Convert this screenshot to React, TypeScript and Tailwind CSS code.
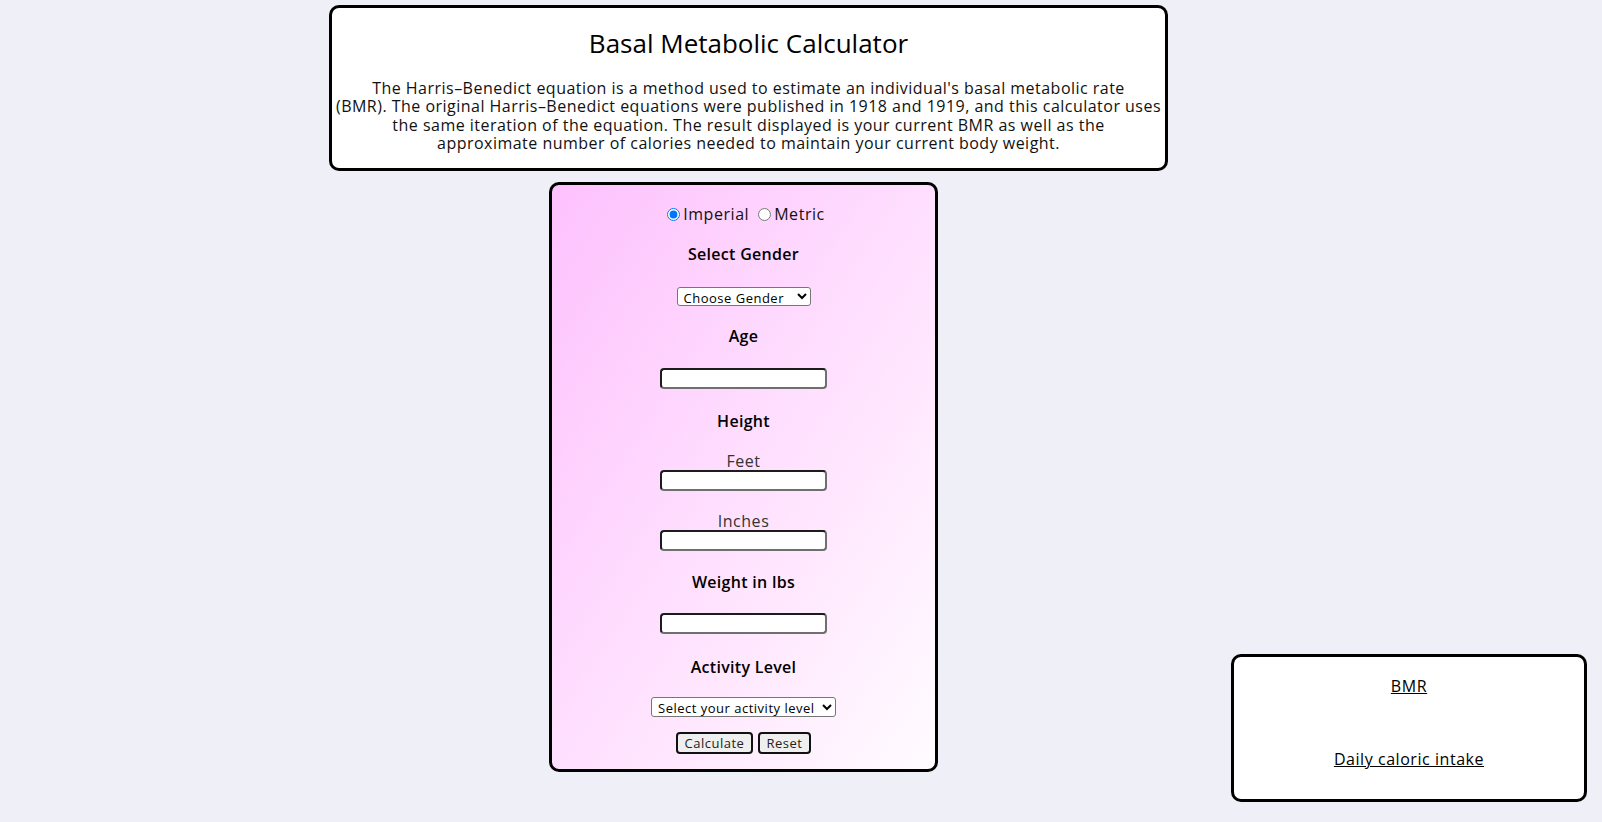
import React from "react";

function Label({ children, className = "" }: { children: React.ReactNode; className?: string }) {
  return <div className={"text-[16px] leading-[20px] font-semibold tracking-[0.3px] " + className}>{children}</div>;
}

function TextBox({ className = "" }: { className?: string }) {
  return (
    <input
      type="text"
      className={
        "block w-[167px] h-[21px] bg-white rounded-[4px] border-2 border-t-[#1c1c1c] border-l-[#1c1c1c] border-r-[#6f6f6f] border-b-[#6f6f6f] " +
        className
      }
    />
  );
}

function Header() {
  return (
    <div className="h-[166px] bg-white border-[3px] border-black rounded-[10px] pt-[20px] text-center">
      <h1 className="text-[26px] leading-[30px] font-medium tracking-normal">Basal Metabolic Calculator</h1>
      <p className="mt-[21px] text-[16px] leading-[18.4px] tracking-[0.48px] text-[#111] whitespace-nowrap">
        The Harris–Benedict equation is a method used to estimate an individual's basal metabolic rate
        <br />
        (BMR). The original Harris–Benedict equations were published in 1918 and 1919, and this calculator uses
        <br />
        the same iteration of the equation. The result displayed is your current BMR as well as the
        <br />
        approximate number of calories needed to maintain your current body weight.
      </p>
    </div>
  );
}

function CalcForm() {
  return (
    <form className="ml-[220px] mt-[11px] w-[389px] h-[590px] border-[3px] border-black rounded-[10px] bg-linear-to-br from-[#fdc1fd] to-[#fffcff] flex flex-col items-center pt-[19px]">
      <div className="h-5 flex items-center text-[16px] leading-[20px] text-[#111]">
        <input type="radio" name="units" defaultChecked className="ml-[5px] mr-[3px] w-[13px] h-[13px]" />
        Imperial
        <span className="w-[4px]" />
        <input type="radio" name="units" className="ml-[5px] mr-[3px] w-[13px] h-[13px]" />
        Metric
      </div>

      <Label className="mt-[20px]">Select Gender</Label>
      <select className="mt-[23px] w-[134px] h-[19px] bg-white border border-[#767676] rounded-[3px] text-[13px] tracking-[0.5px] pl-[2px]">
        <option>Choose Gender</option>
        <option>Male</option>
        <option>Female</option>
      </select>

      <Label className="mt-[20px]">Age</Label>
      <TextBox className="mt-[22px]" />

      <Label className="mt-[22px]">Height</Label>
      <div className="mt-[21px] text-[16px] leading-[18px] text-[#333]">Feet</div>
      <TextBox />
      <div className="mt-[21px] text-[16px] leading-[18px] text-[#333]">Inches</div>
      <TextBox />

      <Label className="mt-[21px]">Weight in lbs</Label>
      <TextBox className="mt-[21px]" />

      <Label className="mt-[23px]">Activity Level</Label>
      <select className="mt-[20px] w-[185px] h-[20px] bg-white border border-[#767676] rounded-[3px] text-[13px] tracking-[0.5px] pl-[2px]">
        <option>Select your activity level</option>
        <option>Sedentary</option>
        <option>Lightly active</option>
        <option>Moderately active</option>
        <option>Very active</option>
      </select>

      <div className="mt-[15px] flex gap-[5px]">
        <button type="button" className="w-[77px] h-[22px] bg-[#efefef] border-2 border-[#111] rounded-[4px] text-[13px] tracking-[0.5px] text-[#222]">
          Calculate
        </button>
        <button type="button" className="w-[53px] h-[22px] bg-[#efefef] border-2 border-[#111] rounded-[4px] text-[13px] tracking-[0.5px] text-[#222]">
          Reset
        </button>
      </div>
    </form>
  );
}

function Results() {
  return (
    <div className="ml-[63px] mt-[654px] w-[356px] h-[148px] bg-white border-[3px] border-black rounded-[10px] pt-[19px] text-center text-[16px] leading-[20px]">
      <p className="underline">BMR</p>
      <p className="mt-[53px] underline">Daily caloric intake</p>
    </div>
  );
}

export default function App() {
  return (
    <div className="min-h-screen bg-[#efeff7] font-['Open_Sans',sans-serif] tracking-[0.55px] text-black flex items-start">
      <div className="ml-[329px] mt-[5px] w-[839px] flex flex-col">
        <Header />
        <CalcForm />
      </div>
      <Results />
    </div>
  );
}
